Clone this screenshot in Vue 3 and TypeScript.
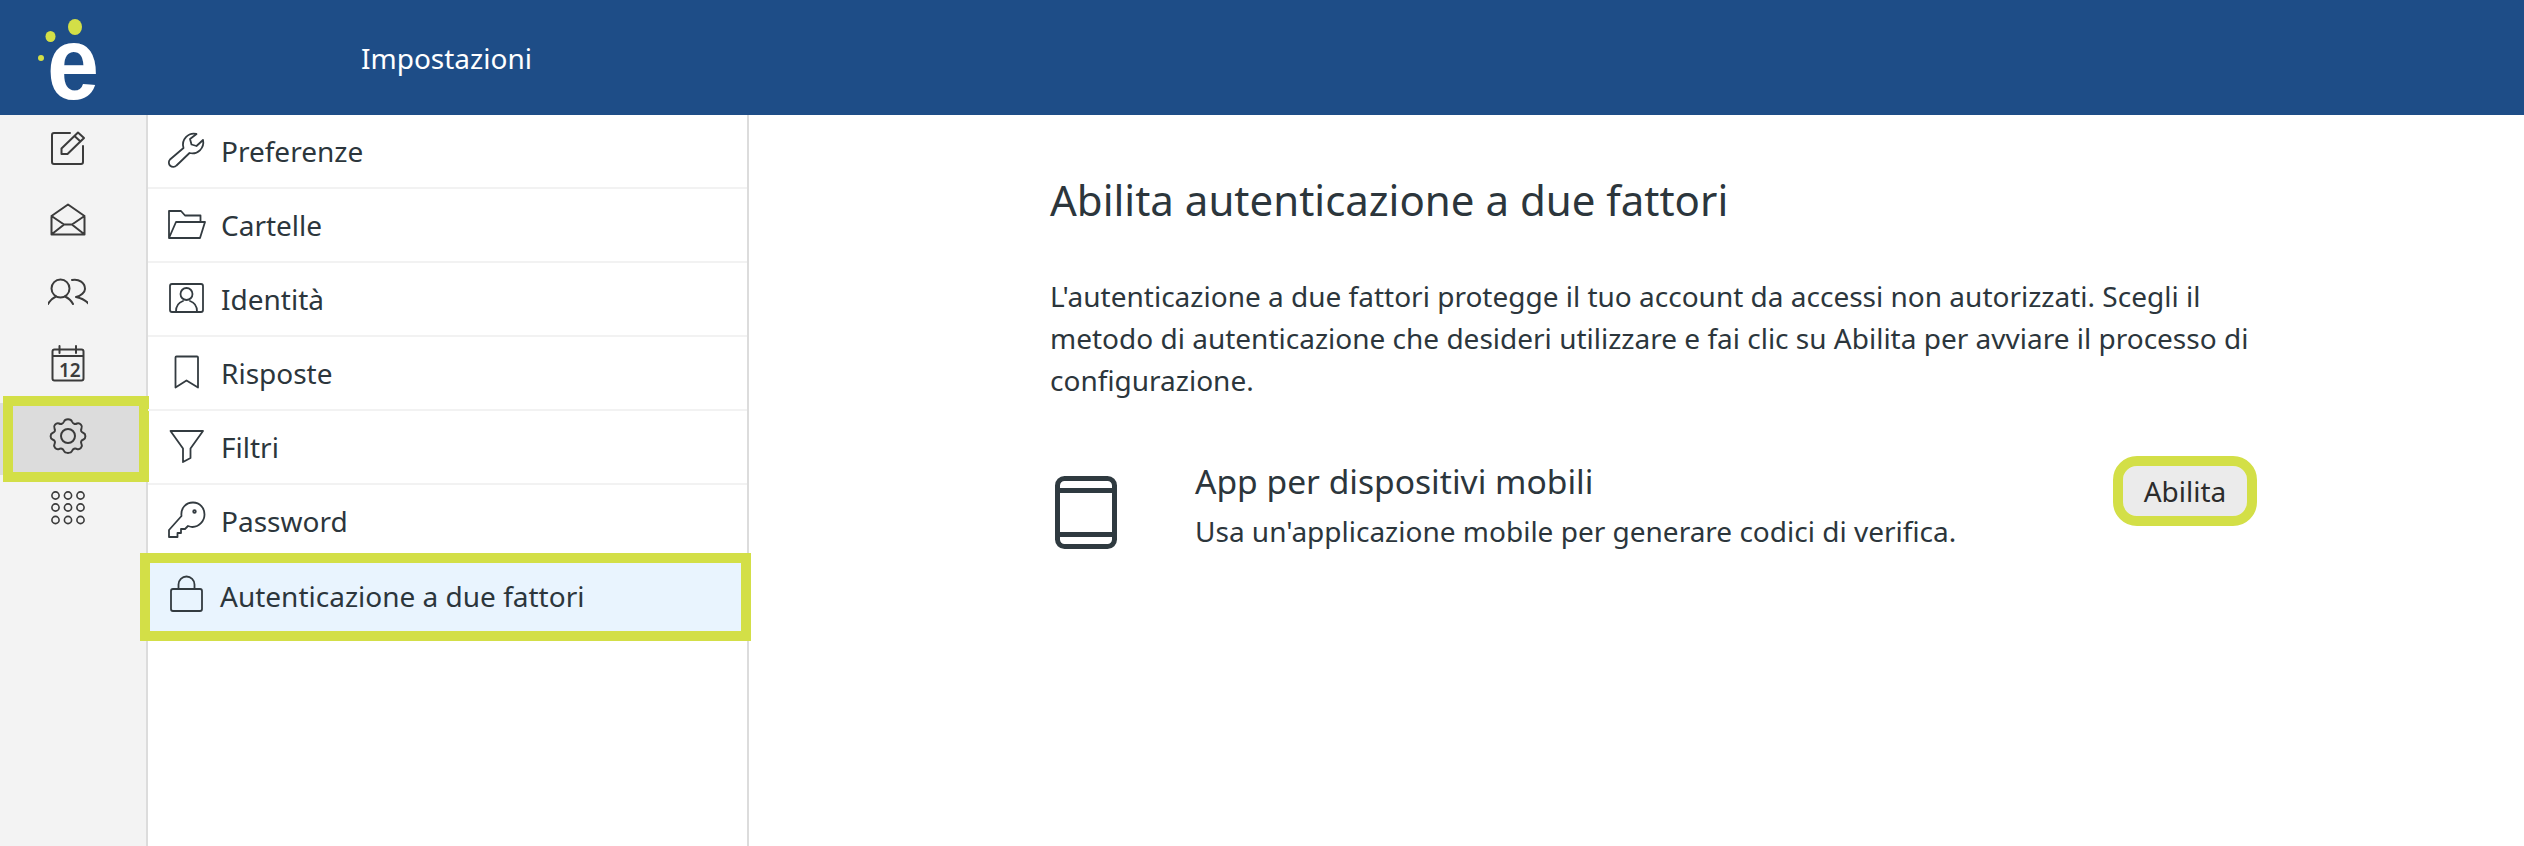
<script setup lang="ts">
interface MenuItem {
  label: string;
  active?: boolean;
}

const menu: MenuItem[] = [
  { label: "Preferenze" },
  { label: "Cartelle" },
  { label: "Identità" },
  { label: "Risposte" },
  { label: "Filtri" },
  { label: "Password" },
  { label: "Autenticazione a due fattori", active: true },
];
</script>

<template>
  <div class="page">
    <header class="topbar">
      <div class="logo">
        <svg width="146" height="115" viewBox="0 0 146 115">
          <circle cx="41" cy="58" r="3" fill="#d3df47" />
          <ellipse cx="50.500" cy="36.500" rx="5" ry="5.500" fill="#d3df47" />
          <ellipse cx="75" cy="27" rx="7" ry="8" fill="#d3df47" />
        </svg>
        <span class="logo-e">e</span>
      </div>
      <div class="title">Impostazioni</div>
    </header>
    <div class="body">
      <nav class="rail">
        <a class="rail-item">
          <svg class="rail-icon" viewBox="48 128 40 40">
            <path d="M70 133H54a2 2 0 0 0-2 2v27a2 2 0 0 0 2 2h27a2 2 0 0 0 2-2V146" />
            <path d="M61.500 154V148.500L78 132.500L84 138L67.500 154ZM74.500 136L80.500 141.500" />
          </svg>
        </a>
        <a class="rail-item">
          <svg class="rail-icon" viewBox="48 200 40 40">
            <path d="M51.500 234.500V216L68 204.500L84.500 216V234.500ZM51.500 216L64 224.500H72L84.500 216M52 234L63.500 225M84 234L72.500 225" />
          </svg>
        </a>
        <a class="rail-item">
          <svg class="rail-icon" viewBox="48 272 40 40">
            <circle cx="60.500" cy="288.500" r="9" />
            <path d="M48 304C50 300 54 297.500 56 296.500M65 296.500C67 297.500 71 300 73 304M72 280C79 278.500 85 283 85 289C85 292 81 296 76 297C81 298 85.500 300 89 304" />
          </svg>
        </a>
        <a class="rail-item">
          <svg class="rail-icon" viewBox="48 344 40 40">
            <path d="M52.500 351.500a2 2 0 0 1 2-2h27a2 2 0 0 1 2 2v27a2 2 0 0 1-2 2h-27a2 2 0 0 1-2-2ZM52.500 356H83.500M59.500 346V353M76 346V353" />
            <text x="59" y="377" class="cal-num">12</text>
          </svg>
        </a>
        <a class="rail-item active">
          <svg class="rail-icon" viewBox="48 416 40 40">
            <circle cx="68" cy="436" r="7" />
            <path d="M64 421.500C65 418.500 71 418.500 72 421.500C73 424 75 424.500 77 423.500C80 422.500 83 426 81.500 428.500C80.500 430.500 81 432 83.500 433C86 434 86 438.500 83.500 439.500C81 440.500 80.500 442 81.500 444C83 446.500 80 450 77 449C75 448 73 448.500 72 451C71 453.500 65 453.500 64 451C63 448.500 61 448 59 449C56 450 53 446.500 54.500 444C55.500 442 55 440.500 52.500 439.500C50 438.500 50 434 52.500 433C55 432 55.500 430.500 54.500 428.500C53 426 56 422.500 59 423.500C61 424.500 63 424 64 421.500Z" />
          </svg>
        </a>
        <a class="rail-item">
          <svg class="rail-icon grid" viewBox="48 488 40 40">
            <g v-for="cy in [495.500, 507.500, 520]" :key="cy">
              <circle v-for="cx in [55.500, 68, 80.500]" :key="cx" :cx="cx" :cy="cy" r="3.600" />
            </g>
          </svg>
        </a>
      </nav>
      <aside class="list">
        <a v-for="(item, i) in menu" :key="item.label" class="row" :class="{ active: item.active }">
          <svg class="row-icon" :viewBox="`162 ${125 + i * 74} 50 50`">
            <path v-if="i === 0" d="M196.500 133a11 11 0 0 0-13 14L170 158.500a4.300 4.300 0 0 0 6.500 6L189.500 152a11 11 0 0 0 13.500-13l-6.500 6-5-1.500-1.500-5.500Z" />
            <path v-else-if="i === 1" d="M169 237V210H181L185 214.500H200.500V220.500M169 237L176 221H205L200 237Z" />
            <template v-else-if="i === 2">
              <rect x="170" y="283" width="33" height="28" rx="2" />
              <circle cx="186.500" cy="293" r="6" />
              <path d="M176 310.500C176 304 180 301 183 300M197 310.500C197 304 193 301 190 300" />
            </template>
            <path v-else-if="i === 3" d="M175.500 386.500V356.500a1 1 0 0 1 1-1H197a1 1 0 0 1 1 1V386.500L186.500 379.500Z" />
            <path v-else-if="i === 4" d="M170.500 430H203L190.500 447.500V457L183 461V447.500Z" />
            <template v-else-if="i === 5">
              <path d="M181.500 515C180.500 507 186 501.500 193 501.500C200 501.500 204.500 507 204.500 513.500C204.500 520 199 526 192.500 526C191 526 189.500 525.500 188 525L185 528H181V532H177.500V536H169V529Z" />
              <circle cx="194.500" cy="510.500" r="1.300" />
            </template>
            <template v-else>
              <rect x="171" y="587" width="31" height="22" rx="2" />
              <path d="M178.500 587V582.500a8 8 0 0 1 16 0V587" />
            </template>
          </svg>
          <span class="row-label">{{ item.label }}</span>
        </a>
      </aside>
      <main class="content">
        <h1 class="heading">Abilita autenticazione a due fattori</h1>
        <p class="intro">
          L'autenticazione a due fattori protegge il tuo account da accessi non autorizzati. Scegli il
          metodo di autenticazione che desideri utilizzare e fai clic su Abilita per avviare il processo di
          configurazione.
        </p>
        <div class="method">
          <svg class="device" width="62" height="73" viewBox="0 0 62 73">
            <rect x="2.500" y="2.500" width="57" height="68" rx="7" />
            <path d="M2.500 14.500H59.500M2.500 58.500H59.500" />
          </svg>
          <div class="method-text">
            <div class="method-title">App per dispositivi mobili</div>
            <div class="method-desc">Usa un'applicazione mobile per generare codici di verifica.</div>
          </div>
          <button class="enable">Abilita</button>
        </div>
      </main>
    </div>
  </div>
</template>

<style scoped>
.page {
  width: 2524px;
  height: 846px;
  display: flex;
  flex-direction: column;
  overflow: hidden;
  font-family: "Noto Sans", sans-serif;
  color: #2c363c;
  background: #fff;
}

.topbar {
  height: 115px;
  flex: none;
  display: flex;
  align-items: center;
  background: #1e4d87;
}

.logo {
  position: relative;
  width: 146px;
  height: 115px;
}

.logo svg {
  display: block;
}

.logo-e {
  position: absolute;
  left: 47px;
  top: 28px;
  font-family: "Liberation Sans", sans-serif;
  font-size: 104px;
  font-weight: 700;
  line-height: 70px;
  color: #fff;
  transform: scaleX(0.9);
  transform-origin: left center;
}

.title {
  margin-left: 215px;
  font-size: 28px;
  color: #fff;
}

.body {
  flex: 1;
  display: flex;
  min-height: 0;
}

.rail {
  width: 148px;
  flex: none;
  box-sizing: border-box;
  background: #f3f3f3;
  border-right: 2px solid #dcdcdc;
}

.rail-item {
  position: relative;
  height: 72px;
  box-sizing: border-box;
  padding: 13px 48px 0 48px;
  display: block;
}

.rail-item.active {
  background: #dcdcdc;
}

.rail-item.active::after {
  content: "";
  position: absolute;
  top: -7px;
  bottom: -7px;
  left: 3px;
  right: -3px;
  border: 10px solid #d3df47;
}

.rail-icon {
  display: block;
  width: 40px;
  height: 40px;
  fill: none;
  stroke: #3b3b3b;
  stroke-width: 2;
  stroke-linejoin: round;
  stroke-linecap: round;
}

.rail-icon.grid {
  stroke-width: 1.6;
}

.cal-num {
  font-family: "Noto Sans", sans-serif;
  font-size: 19px;
  font-weight: 600;
  fill: #3b3b3b;
  stroke: none;
}

.list {
  width: 601px;
  flex: none;
  box-sizing: border-box;
  border-right: 2px solid #dcdcdc;
}

.row {
  position: relative;
  height: 74px;
  box-sizing: border-box;
  display: flex;
  align-items: center;
  gap: 9px;
  padding-left: 14px;
  border-bottom: 2px solid #f2f2f2;
}

.row.active {
  gap: 8px;
  border-bottom: none;
  background: #e9f4fe;
}

.row.active::after {
  content: "";
  position: absolute;
  top: -6px;
  bottom: -8px;
  left: -8px;
  right: -4px;
  border: 10px solid #d3df47;
}

.row-icon {
  display: block;
  width: 50px;
  height: 50px;
  flex: none;
  fill: none;
  stroke: #333b40;
  stroke-width: 1.8;
  stroke-linejoin: round;
  stroke-linecap: round;
}

.row-label {
  font-size: 28px;
}

.content {
  flex: 1;
  box-sizing: border-box;
  padding: 58px 277px 0 301px;
}

.heading {
  margin: 0;
  font-size: 42px;
  font-weight: 400;
  line-height: 54px;
}

.intro {
  margin: 48px -20px 0 0;
  font-size: 28px;
  line-height: 42px;
}

.method {
  margin-top: 55px;
  display: flex;
  align-items: flex-start;
}

.device {
  margin: 20px 0 0 5px;
  flex: none;
  fill: none;
  stroke: #2f3a40;
  stroke-width: 5;
}

.method-text {
  flex: 1;
  margin-left: 78px;
}

.method-title {
  font-size: 33.6px;
  line-height: 50px;
}

.method-desc {
  margin-top: 4px;
  font-size: 28px;
  line-height: 42px;
}

.enable {
  width: 124px;
  height: 50px;
  margin: 10px 0 0;
  padding: 0;
  border: none;
  border-radius: 14px;
  background: #ebebeb;
  color: #2c2c2c;
  font: 28px "Noto Sans", sans-serif;
  outline: 10px solid #d3df47;
}
</style>

<style>
html,
body {
  margin: 0;
  background: #fff;
}
</style>
